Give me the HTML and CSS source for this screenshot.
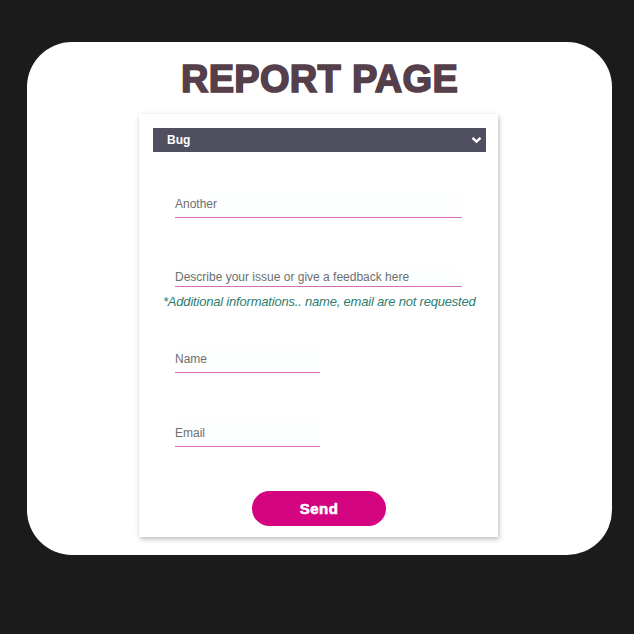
FILE: index.html
```html
<!DOCTYPE html>
<html>
<head>
<meta charset="utf-8">
<link rel="stylesheet" href="styles.css">
</head>
<body>
<div class="panel">
  <h1 class="title">REPORT PAGE</h1>
  <form class="card">
    <div class="select">
      <span class="select-value">Bug</span>
      <svg class="chevron" width="11" height="8" viewBox="0 0 11 8"><path d="M1.5 1.8 L5.5 5.6 L9.5 1.8" fill="none" stroke="#fff" stroke-width="2.4"/></svg>
    </div>
    <input class="field field-wide f-another" type="text" placeholder="Another">
    <textarea class="field field-wide f-desc" placeholder="Describe your issue or give a feedback here"></textarea>
    <p class="note">*Additional informations.. name, email are not requested</p>
    <input class="field field-short f-name" type="text" placeholder="Name">
    <input class="field field-short f-email" type="text" placeholder="Email">
    <button class="send" type="button">Send</button>
  </form>
</div>
</body>
</html>
```
FILE: styles.css
```css
html, body {
  margin: 0;
  padding: 0;
  background: #1b1b1b;
}
body {
  padding-top: 42px;
  font-family: "Liberation Sans", Arial, sans-serif;
}
.panel {
  margin: 0 22px 0 27px;
  height: 513px;
  background: #fff;
  border-radius: 45px;
  display: flex;
  flex-direction: column;
  align-items: center;
}
.title {
  margin: 15px 0 0 0;
  height: 57px;
  font-size: 38px;
  line-height: 44px;
  font-weight: 700;
  color: #553f4a;
  -webkit-text-stroke: 1.6px #553f4a;
  letter-spacing: 0.3px;
  text-shadow: 0.5px 0.5px 0 rgba(160, 120, 60, 0.35);
}
.card {
  width: 359px;
  height: 423px;
  box-sizing: border-box;
  padding: 14px 12px 0 14px;
  background: #fff;
  box-shadow: 1px 2px 5px rgba(0, 0, 0, 0.28);
  display: flex;
  flex-direction: column;
  align-items: flex-start;
  margin-left: -2px;
}
.select {
  width: 333px;
  height: 24px;
  background: #4f4f60;
  display: flex;
  align-items: center;
  justify-content: space-between;
  padding: 0 4px 0 14px;
  box-sizing: border-box;
}
.select-value {
  color: #fff;
  font-size: 12px;
  font-weight: 700;
}
.chevron {
  display: block;
}
.field {
  margin-left: 22px;
  border: none;
  border-bottom: 1px solid #d66cbf;
  background: #fdfefe;
  font-family: "Liberation Sans", Arial, sans-serif;
  font-size: 12px;
  color: #333;
  padding: 0;
  box-sizing: border-box;
  outline: none;
}
.field::placeholder {
  color: #6f6f6f;
}
.field-wide { width: 287px; }
.field-short { width: 145px; }
.f-another {
  margin-top: 39px;
  height: 27px;
}
.f-desc {
  margin-top: 51px;
  height: 18px;
  resize: none;
  line-height: 14px;
  padding-top: 1px;
  overflow: hidden;
}
.note {
  margin: 7px 0 0 10px;
  font-size: 13px;
  line-height: 16px;
  font-style: italic;
  white-space: nowrap;
  color: #2f7d6f;
  letter-spacing: -0.2px;
}
.f-name {
  margin-top: 36px;
  height: 27px;
}
.f-email {
  margin-top: 47px;
  height: 27px;
}
.send {
  margin: 44px 0 0 99px;
  width: 134px;
  height: 35px;
  border: none;
  border-radius: 18px;
  background: #d4037f;
  color: #fff;
  font-family: "Liberation Sans", Arial, sans-serif;
  font-size: 15px;
  font-weight: 700;
  -webkit-text-stroke: 0.6px #fff;
  letter-spacing: 0.5px;
}
```
